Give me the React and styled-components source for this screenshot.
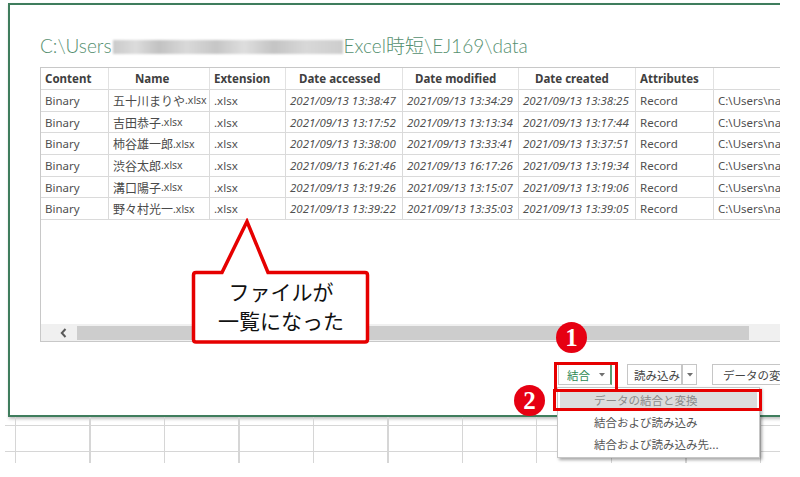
import React from "react";
import styled, { createGlobalStyle } from "styled-components";

const GlobalStyle = createGlobalStyle`
  body {
    margin: 0;
    background: #fff;
    font-family: "Noto Sans", "Noto Sans CJK JP", sans-serif;
  }
`;

const columns = [
  { label: "Content", width: "68px", pad: 4 },
  { label: "Name", width: "101px", pad: 26 },
  { label: "Extension", width: "76px", pad: 4 },
  { label: "Date accessed", width: "117px", pad: 13 },
  { label: "Date modified", width: "116px", pad: 12 },
  { label: "Date created", width: "117px", pad: 16 },
  { label: "Attributes", width: "78px", pad: 4 },
  { label: "", width: "1fr", pad: 4 },
];

const files = [
  ["五十川まりや", "2021/09/13 13:38:47", "2021/09/13 13:34:29", "2021/09/13 13:38:25"],
  ["吉田恭子", "2021/09/13 13:17:52", "2021/09/13 13:13:34", "2021/09/13 13:17:44"],
  ["柿谷雄一郎", "2021/09/13 13:38:00", "2021/09/13 13:33:41", "2021/09/13 13:37:51"],
  ["渋谷太郎", "2021/09/13 16:21:46", "2021/09/13 16:17:26", "2021/09/13 13:19:34"],
  ["溝口陽子", "2021/09/13 13:19:26", "2021/09/13 13:15:07", "2021/09/13 13:19:06"],
  ["野々村光一", "2021/09/13 13:39:22", "2021/09/13 13:35:03", "2021/09/13 13:39:05"],
];

const menuItems = ["データの結合と変換", "結合および読み込み", "結合および読み込み先..."];

const Caret = () => (
  <svg width="6" height="4" viewBox="0 0 6 4">
    <path d="M0 0 L6 0 L3 3.5 Z" fill="#707070" />
  </svg>
);

const App = () => {
  return (
    <>
      <GlobalStyle />
      <Page>
        <Dialog>
          <Title>
            {"C:\\Users"}
            <Redacted />
            {"Excel時短\\EJ169\\data"}
          </Title>

          <TableFrame>
            <Grid>
              {columns.map((c, i) => (
                <HeadCell key={i} pad={c.pad}>
                  {c.label}
                </HeadCell>
              ))}
              {files.map((f, r) => (
                <React.Fragment key={r}>
                  <Cell>Binary</Cell>
                  <Cell>
                    <JpName>{f[0]}</JpName>
                    <Ext>.xlsx</Ext>
                  </Cell>
                  <Cell>.xlsx</Cell>
                  <DateCell>{f[1]}</DateCell>
                  <DateCell>{f[2]}</DateCell>
                  <DateCell>{f[3]}</DateCell>
                  <Cell>Record</Cell>
                  <Cell>{"C:\\Users\\nak"}</Cell>
                </React.Fragment>
              ))}
            </Grid>
            <Spacer />
            <ScrollBar>
              <ScrollArrow>
                <svg width="7" height="10" viewBox="0 0 7 10">
                  <path d="M5.5 1 L1.8 5 L5.5 9" fill="none" stroke="#5a5a5a" strokeWidth="2" />
                </svg>
              </ScrollArrow>
              <Thumb />
            </ScrollBar>
          </TableFrame>

          <ButtonRow>
            <MenuAnchor>
              <Button active width={54}>
                結合
                <CaretSlot>
                  <Caret />
                </CaretSlot>
              </Button>
              <Menu>
                {menuItems.map((m, i) => (
                  <MenuItem key={m} highlighted={i === 0}>
                    {m}
                  </MenuItem>
                ))}
              </Menu>
            </MenuAnchor>
            <Split>
              <Button width={55} pad={6}>
                読み込み
              </Button>
              <Button width={15} pad={0} centered>
                <Caret />
              </Button>
            </Split>
            <Button width={94} pad={10}>
              データの変換
            </Button>
          </ButtonRow>
        </Dialog>

        <Sheet />

        <Callout>
          <svg width="182" height="128" viewBox="0 0 182 128">
            <path
              d="M3.5 57 Q3.5 54.5 6 54.5 L32 54.5 L57 3.5 L78 54.5 L175 54.5 Q177.5 54.5 177.5 57 L177.5 121.5 Q177.5 124 175 124 L6 124 Q3.5 124 3.5 121.5 Z"
              fill="#fff"
              stroke="#e60000"
              strokeWidth="3.5"
            />
          </svg>
          <CalloutText>
            ファイルが
            <br />
            一覧になった
          </CalloutText>
        </Callout>

        <RedBox x={554} y={362} w={64} h={30} />
        <RedBox x={553} y={389} w={209} h={22} />

        <Badge x={556} y={322}>1</Badge>
        <Badge x={514} y={385}>2</Badge>
      </Page>
    </>
  );
};

const Page = styled.div`
  position: relative;
  width: 780px;
  height: 477px;
  overflow: hidden;
  padding-top: 3px;
  box-sizing: border-box;
  background: #fff;
`;

const Dialog = styled.section`
  box-sizing: border-box;
  width: 840px;
  margin-left: 8px;
  border: 2px solid #3f7d5d;
  background: #fff;
  padding: 0 40px 30px 30px;
  box-shadow: 1px 2px 3px rgba(0, 0, 0, 0.25);
`;

const Title = styled.h1`
  margin: 0;
  height: 62px;
  box-sizing: border-box;
  padding-top: 27px;
  font: 300 19px/28px Lato, "Noto Sans CJK JP", sans-serif;
  color: #558f70;
  white-space: nowrap;
`;

const Redacted = styled.span`
  display: inline-block;
  width: 230px;
  height: 14px;
  margin: 0 1px;
  vertical-align: -1px;
  background: linear-gradient(
    90deg,
    #cacaca 0%,
    #dcdcdc 10%,
    #c2c2c2 20%,
    #d9d9d9 32%,
    #c6c6c6 45%,
    #dedede 57%,
    #c4c4c4 70%,
    #d8d8d8 84%,
    #cdcdcd 100%
  );
  filter: blur(1px);
`;

const TableFrame = styled.div`
  height: 275px;
  box-sizing: border-box;
  border: 1px solid #c8c8c8;
  display: flex;
  flex-direction: column;
`;

const Grid = styled.div`
  display: grid;
  grid-template-columns: ${columns.map((c) => c.width).join(" ")};
  grid-template-rows: 22px;
  grid-auto-rows: 21.7px;
`;

const Cell = styled.div`
  box-sizing: border-box;
  border-right: 1px solid #dadada;
  border-bottom: 1px solid #dadada;
  padding-left: 4px;
  display: flex;
  align-items: center;
  font-size: 11.5px;
  color: #505050;
  white-space: nowrap;
  overflow: hidden;
`;

const HeadCell = styled(Cell)`
  padding-left: ${(p) => p.pad}px;
  font-weight: 700;
  color: #404040;
  border-right-color: #e2e2e2;
`;

const DateCell = styled(Cell)`
  font-style: italic;
`;

const JpName = styled.span`
  font-family: "Noto Sans CJK JP", sans-serif;
  font-size: 12px;
  color: #4a4a4a;
`;

const Ext = styled.span`
  font-size: 10.5px;
`;

const Spacer = styled.div`
  flex: 1;
`;

const ScrollBar = styled.div`
  height: 17px;
  display: flex;
  align-items: center;
  background: #f0f0f0;
`;

const ScrollArrow = styled.div`
  width: 36px;
  display: flex;
  justify-content: center;
  padding-left: 8px;
  box-sizing: border-box;
`;

const Thumb = styled.div`
  width: 672px;
  height: 14px;
  background: #cdcdcd;
`;

const ButtonRow = styled.div`
  display: flex;
  justify-content: flex-end;
  gap: 15px;
  margin-top: 22px;
  height: 21px;
`;

const MenuAnchor = styled.div`
  position: relative;
`;

const Split = styled.div`
  display: flex;
`;

const Button = styled.button`
  box-sizing: border-box;
  width: ${(p) => p.width}px;
  height: 21px;
  padding: 0 0 0 ${(p) => p.pad ?? 8}px;
  display: flex;
  align-items: center;
  justify-content: ${(p) => (p.centered ? "center" : "flex-start")};
  background: #fff;
  border: 1px solid #c6c6c6;
  border-right: ${(p) => (p.active ? "2px solid #5a9c74" : "1px solid #c6c6c6")};
  font-family: "Noto Sans CJK JP", sans-serif;
  font-size: 11.5px;
  color: ${(p) => (p.active ? "#2f8a55" : "#444")};
  white-space: nowrap;
  overflow: hidden;
`;

const CaretSlot = styled.span`
  display: flex;
  margin-left: 9px;
`;

const Menu = styled.div`
  position: absolute;
  top: 23px;
  left: -1px;
  width: 203px;
  box-sizing: border-box;
  padding: 1px 2px 2px;
  background: #fff;
  border: 1px solid #c6c6c6;
  box-shadow: 2px 2px 3px rgba(0, 0, 0, 0.35);
  z-index: 2;
`;

const MenuItem = styled.div`
  height: 22px;
  display: flex;
  align-items: center;
  padding-left: 34px;
  font-family: "Noto Sans CJK JP", sans-serif;
  font-size: 11.5px;
  color: ${(p) => (p.highlighted ? "#8a8a8a" : "#555")};
  background: ${(p) => (p.highlighted ? "#dcdcdc" : "transparent")};
`;

const Sheet = styled.div`
  margin-left: 5px;
  width: 775px;
  height: 46px;
  background-image: repeating-linear-gradient(
      to bottom,
      transparent 0 8px,
      #d6d6d6 8px 9px,
      transparent 9px 26px
    ),
    repeating-linear-gradient(
      to right,
      transparent 0 10px,
      #d6d6d6 10px 11px,
      transparent 11px 74.5px
    );
`;

const Callout = styled.div`
  position: absolute;
  left: 190px;
  top: 218px;
  width: 182px;
  height: 128px;
  z-index: 3;

  svg {
    position: absolute;
    left: 0;
    top: 0;
  }
`;

const CalloutText = styled.div`
  position: relative;
  padding-top: 59px;
  text-align: center;
  font-family: "Noto Sans CJK JP", sans-serif;
  font-size: 21px;
  line-height: 29px;
  color: #111;
`;

const RedBox = styled.div`
  position: absolute;
  left: ${(p) => p.x}px;
  top: ${(p) => p.y}px;
  width: ${(p) => p.w}px;
  height: ${(p) => p.h}px;
  box-sizing: border-box;
  border: 3px solid #e60000;
  z-index: 4;
`;

const Badge = styled.div`
  position: absolute;
  left: ${(p) => p.x}px;
  top: ${(p) => p.y}px;
  width: 31px;
  height: 31px;
  border-radius: 50%;
  background: #e60012;
  color: #fff;
  display: flex;
  align-items: center;
  justify-content: center;
  font: 700 25px/1 "Liberation Serif", serif;
  z-index: 5;
`;

export default App;
